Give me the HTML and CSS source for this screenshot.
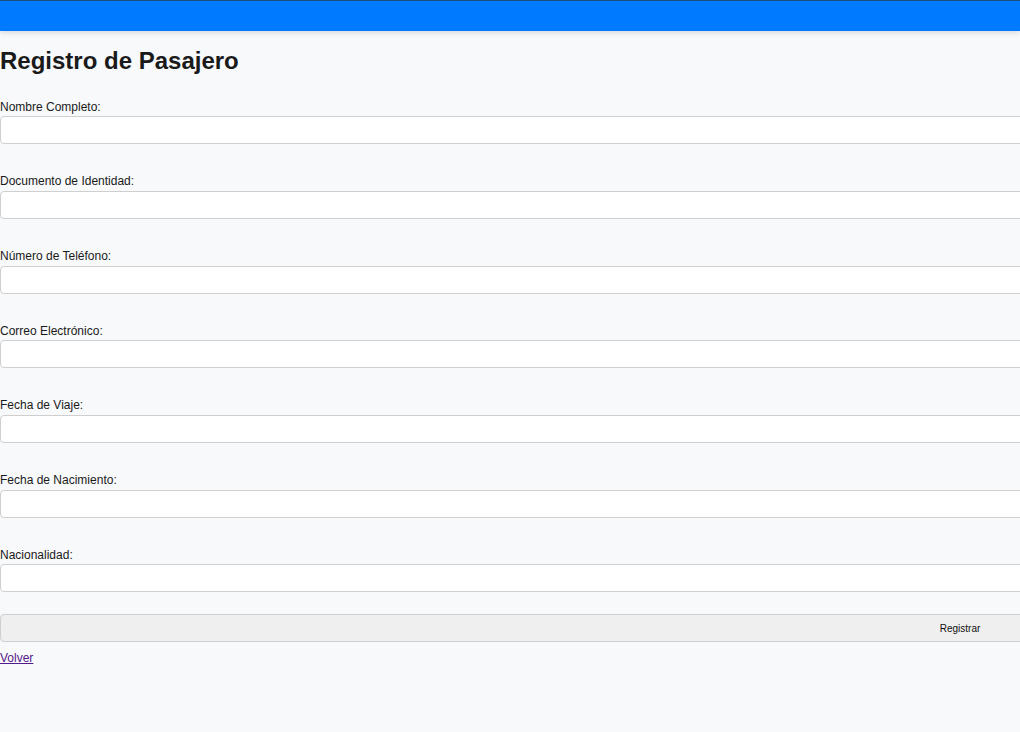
FILE: index.html
```html
<!DOCTYPE html>
<html lang="es">
<head>
<meta charset="utf-8">
<title>Registro de Pasajero</title>
<link rel="stylesheet" href="styles.css">
</head>
<body>
<header class="topbar"></header>
<main class="content">
  <h1 class="title">Registro de Pasajero</h1>
  <form class="form">
    <div class="field">
      <label class="label" for="nombre">Nombre Completo:</label>
      <input class="input" id="nombre" type="text">
    </div>
    <div class="field">
      <label class="label" for="doc">Documento de Identidad:</label>
      <input class="input" id="doc" type="text">
    </div>
    <div class="field">
      <label class="label" for="tel">Número de Teléfono:</label>
      <input class="input" id="tel" type="text">
    </div>
    <div class="field">
      <label class="label" for="correo">Correo Electrónico:</label>
      <input class="input" id="correo" type="text">
    </div>
    <div class="field">
      <label class="label" for="viaje">Fecha de Viaje:</label>
      <input class="input" id="viaje" type="text">
    </div>
    <div class="field">
      <label class="label" for="nac">Fecha de Nacimiento:</label>
      <input class="input" id="nac" type="text">
    </div>
    <div class="field">
      <label class="label" for="nacionalidad">Nacionalidad:</label>
      <input class="input" id="nacionalidad" type="text">
    </div>
    <button class="submit" type="button">Registrar</button>
  </form>
  <a class="back" href="#">Volver</a>
</main>
</body>
</html>
```

FILE: styles.css
```css
html, body {
  margin: 0;
  padding: 0;
  overflow: hidden;
}
body {
  background: #f8f9fa;
  font-family: "Liberation Sans", Arial, sans-serif;
  color: #1a1a1a;
  width: 1020px;
  height: 732px;
}
.topbar {
  height: 30px;
  background: #007bff;
  border-top: 1px solid #1d4f7c;
  box-shadow: 0 2px 5px rgba(0, 0, 0, 0.12);
}
.content {
  width: 1920px;
}
.title {
  margin: 16px 0 26px;
  font-size: 24px;
  font-weight: bold;
  line-height: 27.6px;
  color: #1a1a1a;
}
.form {
  display: flex;
  flex-direction: column;
}
.field {
  display: flex;
  flex-direction: column;
  margin-bottom: 30.87px;
}
.field:last-of-type {
  margin-bottom: 22px;
}
.label {
  font-size: 12px;
  line-height: 13.8px;
  margin-bottom: 2px;
  color: #1a1a1a;
}
.input {
  box-sizing: border-box;
  width: 100%;
  height: 28px;
  margin: 0;
  border: 1px solid #cfcfcf;
  border-radius: 4px;
  background: #ffffff;
}
.submit {
  box-sizing: border-box;
  width: 100%;
  height: 28px;
  margin: 0 0 6px;
  border: 1px solid #cfcfcf;
  border-radius: 4px;
  background: #efefef;
  font-family: "Liberation Sans", Arial, sans-serif;
  font-size: 10px;
  color: #111;
}
.back {
  font-size: 12px;
  line-height: 13.8px;
  color: #551a8b;
}
```
